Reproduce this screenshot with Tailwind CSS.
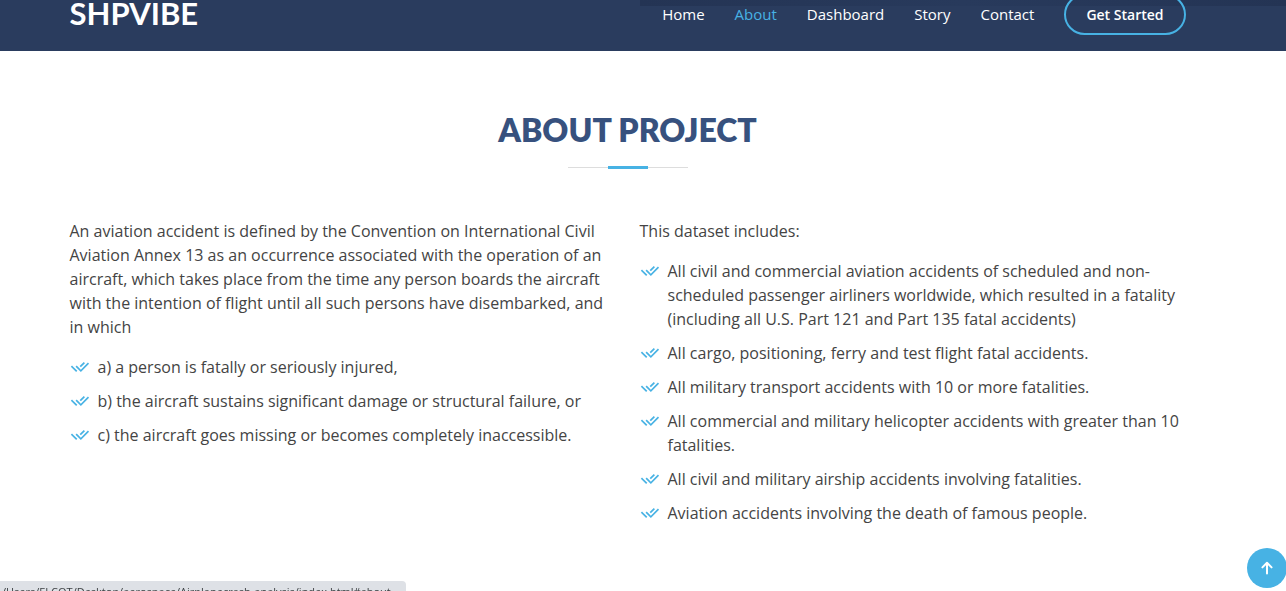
<!DOCTYPE html>
<html lang="en">
<head>
<meta charset="utf-8">
<meta name="viewport" content="width=device-width, initial-scale=1">
<title>SHPVIBE</title>
<script src="https://cdn.jsdelivr.net/npm/@tailwindcss/browser@4"></script>
</head>
<body class="min-h-screen overflow-x-hidden bg-white font-['Open_Sans',sans-serif] text-base text-[#444444]">
<svg class="hidden" aria-hidden="true">
  <symbol id="check" viewBox="0 0 24 24"><path d="M11.602 13.76l1.412 1.412 8.466-8.466 1.414 1.415-9.88 9.88-6.364-6.365 1.414-1.414 2.125 2.125 1.413 1.412zM11.604 10.932l4.952-4.953 1.41 1.41-4.952 4.953zM8.777 16.587L7.364 18 1 11.636l1.414-1.414 1.413 1.413-.001.001z"/></symbol>
</svg>
<header class="relative h-[51px] overflow-hidden bg-[#2a3c5e]">
  <div class="absolute left-[640px] right-0 top-0 h-[6px] bg-linear-to-r from-[#243454] via-[#283a5c] to-[#243454]"></div>
  <div class="relative mr-[31px]">
    <div class="mx-auto flex max-w-[1140px] items-start justify-between px-3">
      <a href="#" class="-mt-[5px] font-['Lato',sans-serif] text-[31px] leading-9 font-bold text-white">SHPVIBE</a>
      <nav class="-mt-[6px] flex items-center text-[15px] text-white">
        <ul class="flex gap-[30px] font-medium">
          <li><a href="#">Home</a></li>
          <li><a href="#about" class="text-[#47b2e4]">About</a></li>
          <li><a href="#">Dashboard</a></li>
          <li><a href="#">Story</a></li>
          <li><a href="#">Contact</a></li>
        </ul>
        <a href="#" class="ml-[30px] rounded-full border-2 border-[#47b2e4] px-5 py-2 text-sm leading-[21px] font-semibold">Get Started</a>
      </nav>
    </div>
  </div>
</header>
<main id="about" class="mr-[31px] py-[60px]">
  <div class="mx-auto max-w-[1140px] px-3">
    <div class="flex flex-col items-center">
      <h2 class="font-['Lato',sans-serif] text-[32px] leading-[38px] font-extrabold text-[#37517e]">ABOUT PROJECT</h2>
      <div class="mt-[17px] flex h-[3px] w-[120px] items-center justify-center bg-[linear-gradient(#dddddd,#dddddd)] bg-[length:100%_1px] bg-center bg-no-repeat"><span class="h-[3px] w-10 bg-[#47b2e4]"></span></div>
    </div>
    <div class="mt-[50px] grid grid-cols-2 gap-6">
      <div>
        <p>An aviation accident is defined by the Convention on International Civil Aviation Annex 13 as an occurrence associated with the operation of an aircraft, which takes place from the time any person boards the aircraft with the intention of flight until all such persons have disembarked, and in which</p>
        <ul class="mt-4 space-y-[10px]">
          <li class="flex gap-2"><svg class="mt-[2px] size-5 shrink-0 fill-[#47b2e4]"><use href="#check"/></svg><span>a) a person is fatally or seriously injured,</span></li>
          <li class="flex gap-2"><svg class="mt-[2px] size-5 shrink-0 fill-[#47b2e4]"><use href="#check"/></svg><span>b) the aircraft sustains significant damage or structural failure, or</span></li>
          <li class="flex gap-2"><svg class="mt-[2px] size-5 shrink-0 fill-[#47b2e4]"><use href="#check"/></svg><span>c) the aircraft goes missing or becomes completely inaccessible.</span></li>
        </ul>
      </div>
      <div>
        <p>This dataset includes:</p>
        <ul class="mt-4 space-y-[10px]">
          <li class="flex gap-2"><svg class="mt-[2px] size-5 shrink-0 fill-[#47b2e4]"><use href="#check"/></svg><span>All civil and commercial aviation accidents of scheduled and non-scheduled passenger airliners worldwide, which resulted in a fatality (including all U.S. Part 121 and Part 135 fatal accidents)</span></li>
          <li class="flex gap-2"><svg class="mt-[2px] size-5 shrink-0 fill-[#47b2e4]"><use href="#check"/></svg><span>All cargo, positioning, ferry and test flight fatal accidents.</span></li>
          <li class="flex gap-2"><svg class="mt-[2px] size-5 shrink-0 fill-[#47b2e4]"><use href="#check"/></svg><span>All military transport accidents with 10 or more fatalities.</span></li>
          <li class="flex gap-2"><svg class="mt-[2px] size-5 shrink-0 fill-[#47b2e4]"><use href="#check"/></svg><span>All commercial and military helicopter accidents with greater than 10 fatalities.</span></li>
          <li class="flex gap-2"><svg class="mt-[2px] size-5 shrink-0 fill-[#47b2e4]"><use href="#check"/></svg><span>All civil and military airship accidents involving fatalities.</span></li>
          <li class="flex gap-2"><svg class="mt-[2px] size-5 shrink-0 fill-[#47b2e4]"><use href="#check"/></svg><span>Aviation accidents involving the death of famous people.</span></li>
        </ul>
      </div>
    </div>
  </div>
</main>
<button type="button" aria-label="Back to top" class="fixed right-[-1px] bottom-[3px] flex size-10 items-center justify-center rounded-full bg-[#47b2e4] text-white">
  <svg class="size-4" viewBox="0 0 16 16" fill="none" stroke="currentColor" stroke-width="2" stroke-linecap="round" stroke-linejoin="round"><path d="M8 13.5V3M3.4 7.4 8 2.8l4.6 4.6"/></svg>
</button>
<div class="fixed bottom-0 left-0 h-[10px] w-[406px] overflow-hidden rounded-tr bg-[#dee1e6] text-[11px] leading-4 text-[#3c4043]">
  <p class="pt-[3px] pl-[2px] whitespace-nowrap">/Users/ELCOT/Desktop/aerospace/Airplanecrash-analysis/index.html#about</p>
</div>
</body>
</html>
